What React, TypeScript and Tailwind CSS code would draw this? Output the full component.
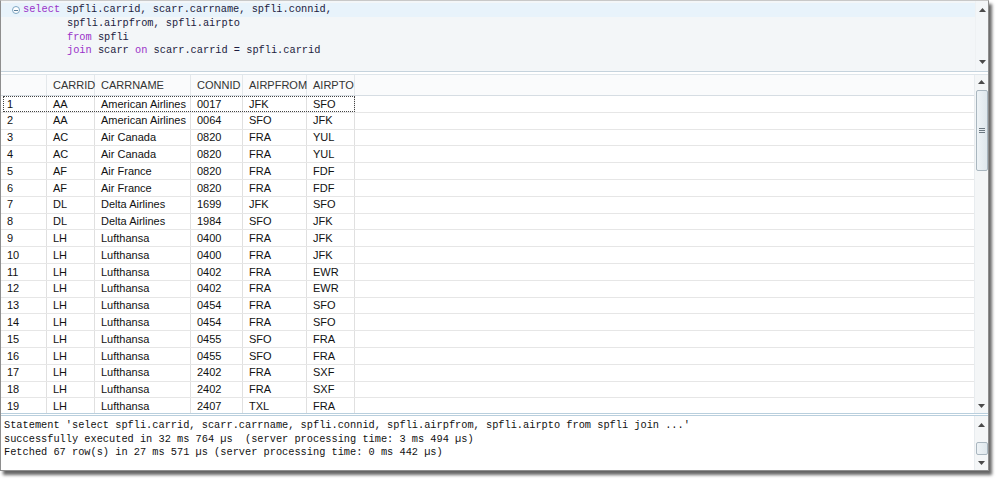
import React from "react";

const rows: [string, string, string, string, string, string][] = [
  ["1", "AA", "American Airlines", "0017", "JFK", "SFO"],
  ["2", "AA", "American Airlines", "0064", "SFO", "JFK"],
  ["3", "AC", "Air Canada", "0820", "FRA", "YUL"],
  ["4", "AC", "Air Canada", "0820", "FRA", "YUL"],
  ["5", "AF", "Air France", "0820", "FRA", "FDF"],
  ["6", "AF", "Air France", "0820", "FRA", "FDF"],
  ["7", "DL", "Delta Airlines", "1699", "JFK", "SFO"],
  ["8", "DL", "Delta Airlines", "1984", "SFO", "JFK"],
  ["9", "LH", "Lufthansa", "0400", "FRA", "JFK"],
  ["10", "LH", "Lufthansa", "0400", "FRA", "JFK"],
  ["11", "LH", "Lufthansa", "0402", "FRA", "EWR"],
  ["12", "LH", "Lufthansa", "0402", "FRA", "EWR"],
  ["13", "LH", "Lufthansa", "0454", "FRA", "SFO"],
  ["14", "LH", "Lufthansa", "0454", "FRA", "SFO"],
  ["15", "LH", "Lufthansa", "0455", "SFO", "FRA"],
  ["16", "LH", "Lufthansa", "0455", "SFO", "FRA"],
  ["17", "LH", "Lufthansa", "2402", "FRA", "SXF"],
  ["18", "LH", "Lufthansa", "2402", "FRA", "SXF"],
  ["19", "LH", "Lufthansa", "2407", "TXL", "FRA"],
];

const widths = ["w-[46px]", "w-[48px]", "w-[96px]", "w-[52px]", "w-[64px]", "w-[48px]"];
const headers = ["", "CARRID", "CARRNAME", "CONNID", "AIRPFROM", "AIRPTO"];

const Up = () => (
  <svg width="7" height="4" viewBox="0 0 7 4"><path d="M0 4 L3.5 0 L7 4 Z" fill="#4a4a4a" /></svg>
);
const Down = () => (
  <svg width="7" height="4" viewBox="0 0 7 4"><path d="M0 0 L3.5 4 L7 0 Z" fill="#4a4a4a" /></svg>
);

const K = ({ children }: { children: React.ReactNode }) => (
  <span className="text-[#9a32c8]">{children}</span>
);

export default function App() {
  const mono = { fontFamily: '"Liberation Mono", "DejaVu Sans Mono", monospace' };
  return (
    <div className="w-[1000px] h-[482px] bg-white">
      <div className="w-[989px] h-[471px] border border-[#8e8e8e] border-t-[#c8c8c8] shadow-[3px_4px_3px_rgba(0,0,0,0.6)] flex flex-col bg-white overflow-hidden">
        {/* Editor */}
        <div className="h-[71px] flex bg-[#f3f6f8] border-b border-[#c5d3dd]">
          <div className="flex-1 pt-[2px] text-[10.3px] leading-[13.5px] text-[#1c1c40]" style={mono}>
            <div className="flex items-center bg-[#e8f3fb] h-[14px]">
              <div className="w-[22px] flex justify-end pr-[3px]">
                <div className="w-[8px] h-[8px] rounded-full border border-[#7ea7c4] bg-white flex items-center justify-center">
                  <div className="w-[4px] h-[1px] bg-[#5a7f9a]" />
                </div>
              </div>
              <span className="whitespace-pre"><K>select</K> spfli.carrid, scarr.carrname, spfli.connid,</span>
            </div>
            <div className="pl-[66px] whitespace-pre">spfli.airpfrom, spfli.airpto</div>
            <div className="pl-[66px] whitespace-pre"><K>from</K> spfli</div>
            <div className="pl-[66px] whitespace-pre"><K>join</K> scarr <K>on</K> scarr.carrid = spfli.carrid</div>
          </div>
          <div className="w-[13px] flex flex-col items-center justify-between py-[7px] bg-[#f3f6f8] border-l border-[#eef1f3]">
            <Up />
            <Down />
          </div>
        </div>
        {/* Grid */}
        <div className="flex-1 flex overflow-hidden mt-[2px] border-t border-[#dfe6eb]">
          <div className="flex-1 overflow-hidden text-[11px] text-[#111]" style={{ fontFamily: '"Liberation Sans", Arial, sans-serif' }}>
            <div className="flex h-[21px] items-center bg-[#fafbfc] border-b border-[#d6dde3] text-[#333]">
              {headers.map((h, i) => (
                <div key={i} className={`${widths[i]} h-full flex items-center pl-[6px] border-r border-[#e4e8eb]`}>{h}</div>
              ))}
            </div>
            {rows.map((r, ri) => (
              <div key={ri} className="flex h-[16.8px] items-center border-b border-[#e6e6e6] relative">
                {r.map((c, ci) => (
                  <div key={ci} className={`${widths[ci]} h-full flex items-center pl-[6px] border-r border-[#e0e0e0]`}>{c}</div>
                ))}
                {ri === 0 && (
                  <div className="absolute left-[2px] top-0 w-[352px] h-full border border-dotted border-[#444]" />
                )}
              </div>
            ))}
          </div>
          <div className="w-[14px] flex flex-col items-center bg-[#f4f6f7] border-l border-[#e8ecef] pt-[5px]">
            <Up />
            <div className="mt-[6px] w-[12px] h-[81px] rounded-[2px] border border-[#a9b6bf] bg-gradient-to-r from-[#eef3f6] to-[#dfe7ec] flex flex-col items-center justify-center gap-[1px]">
              <div className="w-[6px] h-[1px] bg-[#6b7780]" />
              <div className="w-[6px] h-[1px] bg-[#6b7780]" />
              <div className="w-[6px] h-[1px] bg-[#6b7780]" />
            </div>
            <div className="flex-1" />
            <div className="pb-[5px]"><Down /></div>
          </div>
        </div>
        {/* Status */}
        <div className="h-[57px] flex border-t-[3px] border-double border-[#b9cfdd]">
          <div className="flex-1 pl-[3px] pt-[3px] text-[10.3px] leading-[13.5px] text-[#111] whitespace-pre" style={mono}>
            <div>Statement 'select spfli.carrid, scarr.carrname, spfli.connid, spfli.airpfrom, spfli.airpto from spfli join ...'</div>
            <div>successfully executed in 32 ms 764 µs  (server processing time: 3 ms 494 µs)</div>
            <div>Fetched 67 row(s) in 27 ms 571 µs (server processing time: 0 ms 442 µs)</div>
          </div>
          <div className="w-[14px] flex flex-col items-center bg-[#f4f6f7] border-l border-[#e8ecef] pt-[7px] pb-[5px]">
            <Up />
            <div className="mt-[15px] w-[12px] h-[13px] rounded-[2px] border border-[#a9b6bf] bg-gradient-to-r from-[#eef3f6] to-[#dfe7ec]" />
            <div className="flex-1" />
            <Down />
          </div>
        </div>
      </div>
    </div>
  );
}
